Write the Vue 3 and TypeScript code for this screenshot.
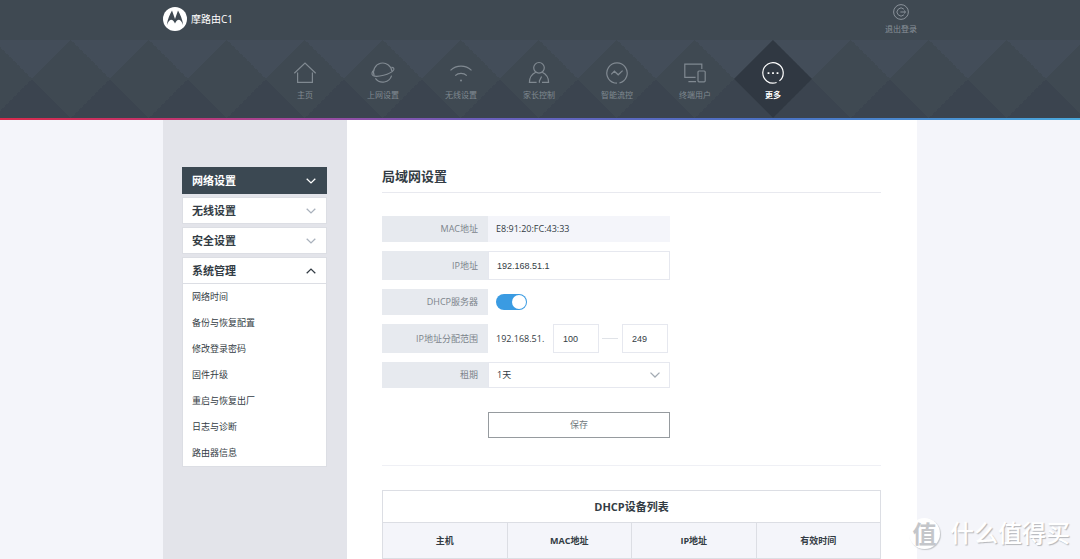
<script setup lang="ts">
import { ref } from 'vue'

interface NavItem {
  id: string
  label: string
}

interface MenuGroup {
  label: string
  current?: boolean
  children: string[]
}

const navItems: NavItem[] = [
  { id: 'home', label: '主页' },
  { id: 'wan', label: '上网设置' },
  { id: 'wifi', label: '无线设置' },
  { id: 'parent', label: '家长控制' },
  { id: 'flow', label: '智能流控' },
  { id: 'devices', label: '终端用户' },
  { id: 'more', label: '更多' },
]
const activeNav = ref('more')

const groups: MenuGroup[] = [
  { label: '网络设置', current: true, children: [] },
  { label: '无线设置', children: [] },
  { label: '安全设置', children: [] },
  {
    label: '系统管理',
    children: ['网络时间', '备份与恢复配置', '修改登录密码', '固件升级', '重启与恢复出厂', '日志与诊断', '路由器信息'],
  },
]
const openGroup = ref('系统管理')

function toggleGroup(label: string): void {
  openGroup.value = openGroup.value === label ? '' : label
}

const mac = 'E8:91:20:FC:43:33'
const ip = ref('192.168.51.1')
const dhcp = ref(true)
const rangeStart = ref('100')
const rangeEnd = ref('249')
const lease = ref('1天')
const columns: string[] = ['主机', 'MAC地址', 'IP地址', '有效时间']
</script>

<template>
  <div class="page">
    <header class="header">
      <div class="topbar wrap">
        <div class="brand">
          <svg class="brand-logo" viewBox="0 0 24 24" aria-hidden="true">
            <circle cx="12" cy="12" r="12" fill="#fff" />
            <path
              d="M9 3.5 12 12 15 3.5C17 7 19.6 12.5 20.2 18.2 19.2 15.4 17.6 12.8 16 12.8 14.2 12.8 13 14.4 12 16.6 11 14.4 9.8 12.8 8 12.8 6.4 12.8 4.8 15.4 3.8 18.2 4.4 12.5 7 7 9 3.5Z"
              fill="#3f4952"
            />
          </svg>
          <span>摩路由C1</span>
        </div>
        <a class="logout" href="#logout">
          <svg viewBox="0 0 16 16" aria-hidden="true">
            <circle cx="8" cy="8" r="7.4" />
            <path d="M10.9 5.2A4 4 0 1 0 10.9 10.8M7.4 8H12.4M11 6.5 12.6 8 11 9.5" />
          </svg>
          <span>退出登录</span>
        </a>
      </div>
      <div class="nav-band">
        <nav class="nav wrap">
          <a
            v-for="item in navItems"
            :key="item.id"
            class="nav-item"
            :class="{ active: item.id === activeNav }"
            :href="'#' + item.id"
            @click="activeNav = item.id"
          >
            <svg class="nav-icon" viewBox="0 0 24 24" aria-hidden="true">
              <path v-if="item.id === 'home'" d="M1.3 12.2 12 2 22.7 12.2M4.6 11.6V21.4H19.4V11.6" />
              <template v-else-if="item.id === 'wan'">
                <path d="M3.2 14.6A9.2 9.2 0 1 1 20.9 10.2M4.4 17.4A9.2 9.2 0 0 0 20.6 14.6" />
                <path d="M3 9.4C.6 10.6.4 13.6 2 14.6 5.8 16.8 19.6 13.4 22.6 9 23.4 7.4 22.6 6.2 20.4 6.4" />
              </template>
              <template v-else-if="item.id === 'wifi'">
                <path d="M1.5 9.4A15.2 15.2 0 0 1 22.5 9.4M6.2 14.6A8.4 8.4 0 0 1 17.8 14.6" />
                <circle class="dot" cx="12" cy="19.4" r="1" />
              </template>
              <template v-else-if="item.id === 'parent'">
                <circle cx="12" cy="6.8" r="5.3" />
                <path d="M8.8 11.2C5 13 2.4 16.8 2.4 21.4H9.6M15.2 11.2C19 13 21.6 16.8 21.6 21.4H15M14.6 15.6 12.4 20V21.8" />
              </template>
              <template v-else-if="item.id === 'flow'">
                <path d="M9.6 22A10.2 10.2 0 1 1 14.4 22M9.6 22 12 22.2M6.2 13.4 9.4 10.2 13.2 13.8 17.6 9.6" />
              </template>
              <template v-else-if="item.id === 'devices'">
                <path d="M12.6 16.4H1.8V3.2H18.8V8M5.4 20.6H13" />
                <rect x="15" y="10" width="7.2" height="10.8" rx="1" />
              </template>
              <template v-else>
                <path d="M15.6 21.5A10.2 10.2 0 1 1 18.4 19.9" />
                <path class="dot" d="M6.6 11.2h1.8V13H6.6ZM11.1 11.2h1.8V13h-1.8ZM15.6 11.2h1.8V13h-1.8Z" />
              </template>
            </svg>
            <span>{{ item.label }}</span>
          </a>
        </nav>
      </div>
      <div class="rainbow"></div>
    </header>

    <div class="body wrap">
      <aside class="sidebar">
        <div v-for="group in groups" :key="group.label" class="group">
          <button
            class="group-head"
            :class="{ current: group.current, open: openGroup === group.label }"
            type="button"
            :aria-expanded="openGroup === group.label"
            @click="toggleGroup(group.label)"
          >
            <span>{{ group.label }}</span>
            <svg viewBox="0 0 10 6" aria-hidden="true"><path d="M.7.8 5 4.9 9.3.8" /></svg>
          </button>
          <ul v-if="openGroup === group.label && group.children.length" class="sub">
            <li v-for="child in group.children" :key="child">
              <a href="#">{{ child }}</a>
            </li>
          </ul>
        </div>
      </aside>

      <main class="main">
        <h1>局域网设置</h1>
        <form class="form" @submit.prevent>
          <div class="row">
            <span class="label">MAC地址</span>
            <span class="readonly">{{ mac }}</span>
          </div>
          <div class="row tall">
            <label class="label" for="ip">IP地址</label>
            <input id="ip" v-model="ip" class="text" type="text" />
          </div>
          <div class="row">
            <label class="label" for="dhcp">DHCP服务器</label>
            <div class="field">
              <input id="dhcp" v-model="dhcp" class="switch" type="checkbox" role="switch" />
            </div>
          </div>
          <div class="row tall">
            <label class="label" for="range-start">IP地址分配范围</label>
            <div class="field">
              <span class="prefix">192.168.51.</span>
              <input id="range-start" v-model="rangeStart" class="text short" type="text" />
              <span class="dash"></span>
              <input v-model="rangeEnd" class="text short" type="text" aria-label="IP地址分配范围" />
            </div>
          </div>
          <div class="row">
            <label class="label" for="lease">租期</label>
            <div class="select-box">
              <select id="lease" v-model="lease">
                <option>1天</option>
              </select>
              <svg viewBox="0 0 10 6" aria-hidden="true"><path d="M.5.6 5 5 9.5.6" /></svg>
            </div>
          </div>
          <button class="save" type="submit">保存</button>
        </form>
        <table class="devices">
          <caption>DHCP设备列表</caption>
          <thead>
            <tr>
              <th v-for="column in columns" :key="column" scope="col">{{ column }}</th>
            </tr>
          </thead>
        </table>
      </main>
    </div>

    <div class="watermark">
      <span class="badge">值</span>
      <span>什么值得买</span>
    </div>
  </div>
</template>

<style>
body {
  margin: 0;
  background: #f4f5fa;
}
</style>

<style scoped>
.page {
  position: relative;
  display: flex;
  flex-direction: column;
  box-sizing: border-box;
  min-height: 100vh;
  border-bottom: 1px solid #dcdde2;
  overflow: hidden;
  color: #333c44;
  font: 9px/12px "Open Sans", "Noto Sans CJK SC", sans-serif;
}
.page *,
.page *::before {
  box-sizing: border-box;
}
a {
  color: inherit;
  text-decoration: none;
}
button,
input,
select {
  margin: 0;
  border-radius: 0;
  font: inherit;
  color: inherit;
}
svg {
  display: block;
  fill: none;
  stroke: currentColor;
}
.wrap {
  width: 100%;
  max-width: 754px;
  margin: 0 auto;
}

.header {
  background: #3f4952;
}
.topbar {
  display: flex;
  align-items: flex-start;
  justify-content: space-between;
  height: 40px;
}
.brand {
  display: flex;
  align-items: center;
  gap: 4px;
  padding-top: 7px;
  color: #fff;
  font-size: 10px;
}
.brand-logo {
  width: 24px;
  height: 24px;
  stroke: none;
}
.logout {
  display: flex;
  flex-direction: column;
  align-items: center;
  gap: 3px;
  padding-top: 4px;
  color: #8a929a;
  font-size: 8px;
}
.logout svg {
  width: 16px;
  height: 16px;
}
.nav-band {
  background:
    linear-gradient(135deg, #434d59 25%, transparent 25%) calc(50% - 1px) 0 / 78px 78px,
    linear-gradient(225deg, #434d59 25%, transparent 25%) calc(50% - 1px) 0 / 78px 78px,
    linear-gradient(45deg, #3b444f 25%, transparent 25%) calc(50% - 1px) 0 / 78px 78px,
    linear-gradient(315deg, #3b444f 25%, #3f4952 25%) calc(50% - 1px) 0 / 78px 78px;
}
.nav {
  display: flex;
  height: 78px;
  padding-left: 103px;
}
.nav-item {
  display: flex;
  flex-direction: column;
  align-items: center;
  gap: 4px;
  width: 78px;
  height: 78px;
  padding-top: 21px;
  color: #808991;
  font-size: 8px;
  clip-path: polygon(50% 0, 100% 50%, 50% 100%, 0 50%);
}
.nav-item.active {
  background: #303842;
  color: #fff;
  font-weight: 700;
}
.nav-icon {
  width: 24px;
  height: 24px;
  stroke-width: 1.2;
}
.nav-icon .dot {
  fill: currentColor;
  stroke: none;
}
.rainbow {
  height: 2px;
  background: linear-gradient(90deg, #d92a4c, #c2356e 16%, #a0489c 27%, #6a5fbc 45%, #4a72c4 72%, #4aa8dc);
}

.body {
  display: flex;
  flex: 1;
  background: #fff;
}
.sidebar {
  display: flex;
  flex-direction: column;
  gap: 3px;
  width: 184px;
  padding: 47px 20px 0 19px;
  background: #e3e4ea;
}
.group-head {
  display: flex;
  align-items: center;
  justify-content: space-between;
  width: 100%;
  height: 27px;
  padding: 0 10px 0 9px;
  border: 1px solid #dcdee4;
  background: #fff;
  font-size: 11px;
  font-weight: 700;
  line-height: 14px;
}
.group-head svg {
  width: 10px;
  height: 6px;
  color: #a9b1bc;
  stroke-width: 1.3;
}
.group-head.current {
  border-color: #3b4852;
  background: #3b4852;
  color: #fff;
}
.group-head.current svg {
  color: #fff;
}
.group-head.open svg {
  color: #333c44;
  transform: rotate(180deg);
}
.sub {
  margin: 0;
  padding: 0;
  list-style: none;
  border: solid #dcdee4;
  border-width: 0 1px 1px;
  background: #fff;
}
.sub a {
  display: block;
  padding: 0 9px;
  line-height: 26px;
}

.main {
  flex: 1;
  padding: 46px 36px 0 35px;
}
h1 {
  margin: 0;
  padding-bottom: 6px;
  border-bottom: 1px solid #e8e9ef;
  font-size: 13px;
  line-height: 20px;
}
.form {
  display: flex;
  flex-direction: column;
  gap: 9px;
  padding: 23px 0 27px;
  border-bottom: 1px solid #eff0f5;
}
.row {
  display: flex;
  height: 26px;
}
.row.tall {
  height: 29px;
}
.label {
  display: flex;
  align-items: center;
  justify-content: flex-end;
  width: 106px;
  padding-right: 10px;
  background: #e7eaef;
  color: #7c848b;
}
.readonly,
.select-box {
  width: 182px;
}
.readonly {
  padding-left: 8px;
  background: #f4f5fa;
  line-height: 26px;
}
.text {
  width: 182px;
  padding: 0 8px;
  border: 1px solid #e6e8ef;
  background: #fff;
  font-family: "Liberation Sans", Arial, sans-serif;
}
.text.short {
  width: 46px;
  height: 100%;
  padding: 0 9px;
}
.field {
  display: flex;
  align-items: center;
  padding-left: 8px;
}
.switch {
  appearance: none;
  width: 31px;
  height: 16px;
  border-radius: 8px;
  background: #c8cdd4;
}
.switch::before {
  content: "";
  display: block;
  width: 14px;
  height: 14px;
  margin: 1px;
  border-radius: 50%;
  background: #fff;
}
.switch:checked {
  background: #3a9be2;
}
.switch:checked::before {
  margin-left: 16px;
}
.prefix {
  width: 57px;
}
.dash {
  width: 16px;
  height: 1px;
  margin: 0 4px 0 3px;
  background: #e0e3e8;
}
.select-box {
  position: relative;
}
select {
  appearance: none;
  width: 100%;
  height: 100%;
  padding: 0 8px;
  border: 1px solid #e6e8ef;
  background: #fff;
}
.select-box svg {
  position: absolute;
  top: 10px;
  right: 10px;
  width: 10px;
  height: 6px;
  color: #a3abb3;
  stroke-width: 1.3;
  pointer-events: none;
}
.save {
  width: 182px;
  height: 26px;
  margin: 15px 0 0 106px;
  padding: 0;
  border: 1px solid #969b9f;
  background: #fff;
  color: #707980;
}
.devices {
  width: 100%;
  margin-top: 24px;
  border-collapse: collapse;
  table-layout: fixed;
}
.devices caption {
  height: 32px;
  border: solid #dcdee4;
  border-width: 1px 1px 0;
  font-size: 11px;
  font-weight: 700;
  line-height: 32px;
}
.devices th {
  height: 36px;
  padding: 0;
  border: 1px solid #dcdee4;
  background: #f4f5fa;
}

.watermark {
  position: absolute;
  right: 10px;
  bottom: 10px;
  display: flex;
  align-items: center;
  gap: 10px;
  color: #fff;
  font-size: 24px;
  font-weight: 500;
  line-height: 32px;
  text-shadow: 1px 1px 1px #b4b6ba;
}
.badge {
  width: 31px;
  height: 31px;
  border-radius: 50%;
  background: #fff;
  box-shadow: 1px 1px 1px #c4c6ca;
  color: #c4c6ca;
  font-weight: 700;
  line-height: 31px;
  text-align: center;
  text-shadow: none;
}
</style>
